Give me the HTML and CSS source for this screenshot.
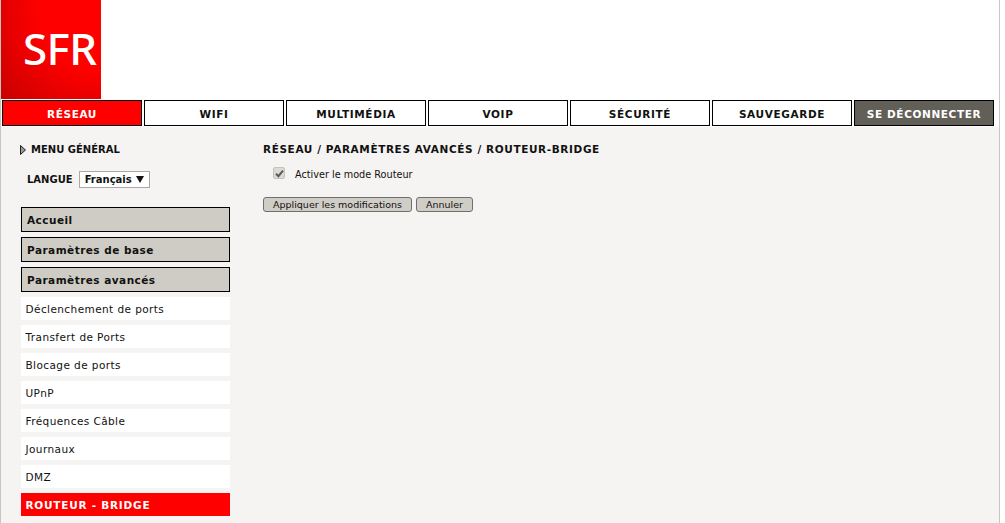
FILE: index.html
```html
<!DOCTYPE html>
<html lang="fr">
<head>
<meta charset="utf-8">
<title>SFR</title>
<link rel="stylesheet" href="styles.css">
</head>
<body>
<div class="page">
  <header class="header">
    <div class="logo"><span class="logo-text">SFR</span></div>
  </header>
  <nav class="nav">
    <a class="tab tab-active">RÉSEAU</a>
    <a class="tab">WIFI</a>
    <a class="tab">MULTIMÉDIA</a>
    <a class="tab">VOIP</a>
    <a class="tab">SÉCURITÉ</a>
    <a class="tab">SAUVEGARDE</a>
    <a class="tab tab-dark">SE DÉCONNECTER</a>
  </nav>
  <div class="body">
    <aside class="side">
      <div class="menu-title"><svg class="arrow" width="6" height="10" viewBox="0 0 6 10"><path d="M.5.5 5.5 5 .5 9.5Z" fill="#9a988f" stroke="#222" stroke-width="1"/></svg>MENU GÉNÉRAL</div>
      <div class="lang"><span class="lang-label">LANGUE</span><span class="select">Français<svg class="caret" width="8" height="7" viewBox="0 0 8 7"><path d="M0 0H8L4 7Z" fill="#111"/></svg></span></div>
      <ul class="menu">
        <li class="head">Accueil</li>
        <li class="head">Paramètres de base</li>
        <li class="head">Paramètres avancés</li>
        <li class="item">Déclenchement de ports</li>
        <li class="item">Transfert de Ports</li>
        <li class="item">Blocage de ports</li>
        <li class="item">UPnP</li>
        <li class="item">Fréquences Câble</li>
        <li class="item">Journaux</li>
        <li class="item">DMZ</li>
        <li class="item item-active">ROUTEUR - BRIDGE</li>
      </ul>
    </aside>
    <main class="main">
      <h1 class="title">RÉSEAU / PARAMÈTRES AVANCÉS / ROUTEUR-BRIDGE</h1>
      <label class="check"><span class="box"><svg width="9" height="9" viewBox="0 0 9 9"><path d="M1 4.8 3.4 7.2 8 1.6" fill="none" stroke="#5a5a5a" stroke-width="2"/></svg></span>Activer le mode Routeur</label>
      <div class="actions"><button class="btn">Appliquer les modifications</button><button class="btn">Annuler</button></div>
    </main>
  </div>
</div>
</body>
</html>
```
FILE: styles.css
```css
html, body { margin: 0; padding: 0; height: 100%; overflow: hidden; background: #fff; }
body { font-family: "DejaVu Sans", Verdana, sans-serif; color: #111; }
.page { width: 1000px; height: 523px; background: #f5f4f2; border-left: 1px solid #c9c7be; border-right: 1px solid #c9c7be; box-sizing: border-box; display: flex; flex-direction: column; }
.header { height: 99px; background: #fff; flex: none; }
.logo { width: 100px; height: 99px; background: radial-gradient(circle at 100% 10%, #ff0000 45%, #b00000 125%); box-sizing: border-box; padding: 25px 0 0 22px; }
.logo-text { font-family: "Noto Sans", sans-serif; font-size: 44px; font-weight: 500; line-height: 46px; color: #fff; letter-spacing: -.6px; display: block; }
.nav { display: flex; gap: 2px; padding: 1px 0 0 1px; background: #fff; height: 28px; box-sizing: border-box; flex: none; }
.tab { width: 140px; height: 26px; box-sizing: border-box; border: 1px solid #000; background: #fff; font-size: 10.5px; font-weight: bold; letter-spacing: .62px; line-height: 27px; text-align: center; }
.tab-active { background: #f00; color: #fff; }
.tab-dark { background: #625f58; color: #fff; }
.body { display: flex; flex: 1; }
.side { width: 262px; flex: none; padding: 0 0 0 19px; box-sizing: border-box; }
.menu-title { display: flex; align-items: center; gap: 5px; margin: 15px 0 0 0; font-size: 10px; font-weight: bold; height: 15px; }
.lang { display: flex; align-items: center; margin: 14px 0 0 7px; gap: 6px; }
.lang-label { font-size: 10px; font-weight: bold; }
.select { display: inline-flex; align-items: center; justify-content: space-between; box-sizing: border-box; width: 71px; height: 17px; padding: 0 5px 0 5px; background: #fff; border: 1px solid #a9a9a9; font-size: 10px; font-weight: bold; }
.menu { list-style: none; margin: 19px 0 0 1px; padding: 0; width: 209px; }
.head { height: 25px; box-sizing: border-box; border: 1px solid #000; background: #cfccc5; font-size: 10.5px; font-weight: bold; letter-spacing: .47px; line-height: 24px; padding-left: 5px; margin-bottom: 5px; }
.item { height: 23px; background: #fff; font-size: 10.5px; letter-spacing: .42px; line-height: 24px; padding-left: 4.5px; margin-bottom: 5px; }
.item-active { background: #f00; color: #fff; font-weight: bold; letter-spacing: .76px; }
.main { flex: 1; }
.title { margin: 16px 0 0 0; font-size: 10.5px; font-weight: bold; letter-spacing: .6px; line-height: 13px; }
.check { display: flex; align-items: center; margin: 10px 0 0 10px; font-size: 9.7px; height: 16px; }
.box { display: flex; align-items: center; justify-content: center; margin: 0 10px 2px 0; width: 12px; height: 12px; box-sizing: border-box; background: #dcdad6; border: 1px solid #c4c2bd; border-radius: 2px; }
.actions { display: flex; gap: 4px; margin-top: 15px; }
.btn { height: 15px; padding: 0 9px; box-sizing: border-box; font-family: inherit; font-size: 9.5px; line-height: 13px; color: #111; background: #d0cdc6; border: 1px solid #6f6f6f; border-radius: 3px; }
```
